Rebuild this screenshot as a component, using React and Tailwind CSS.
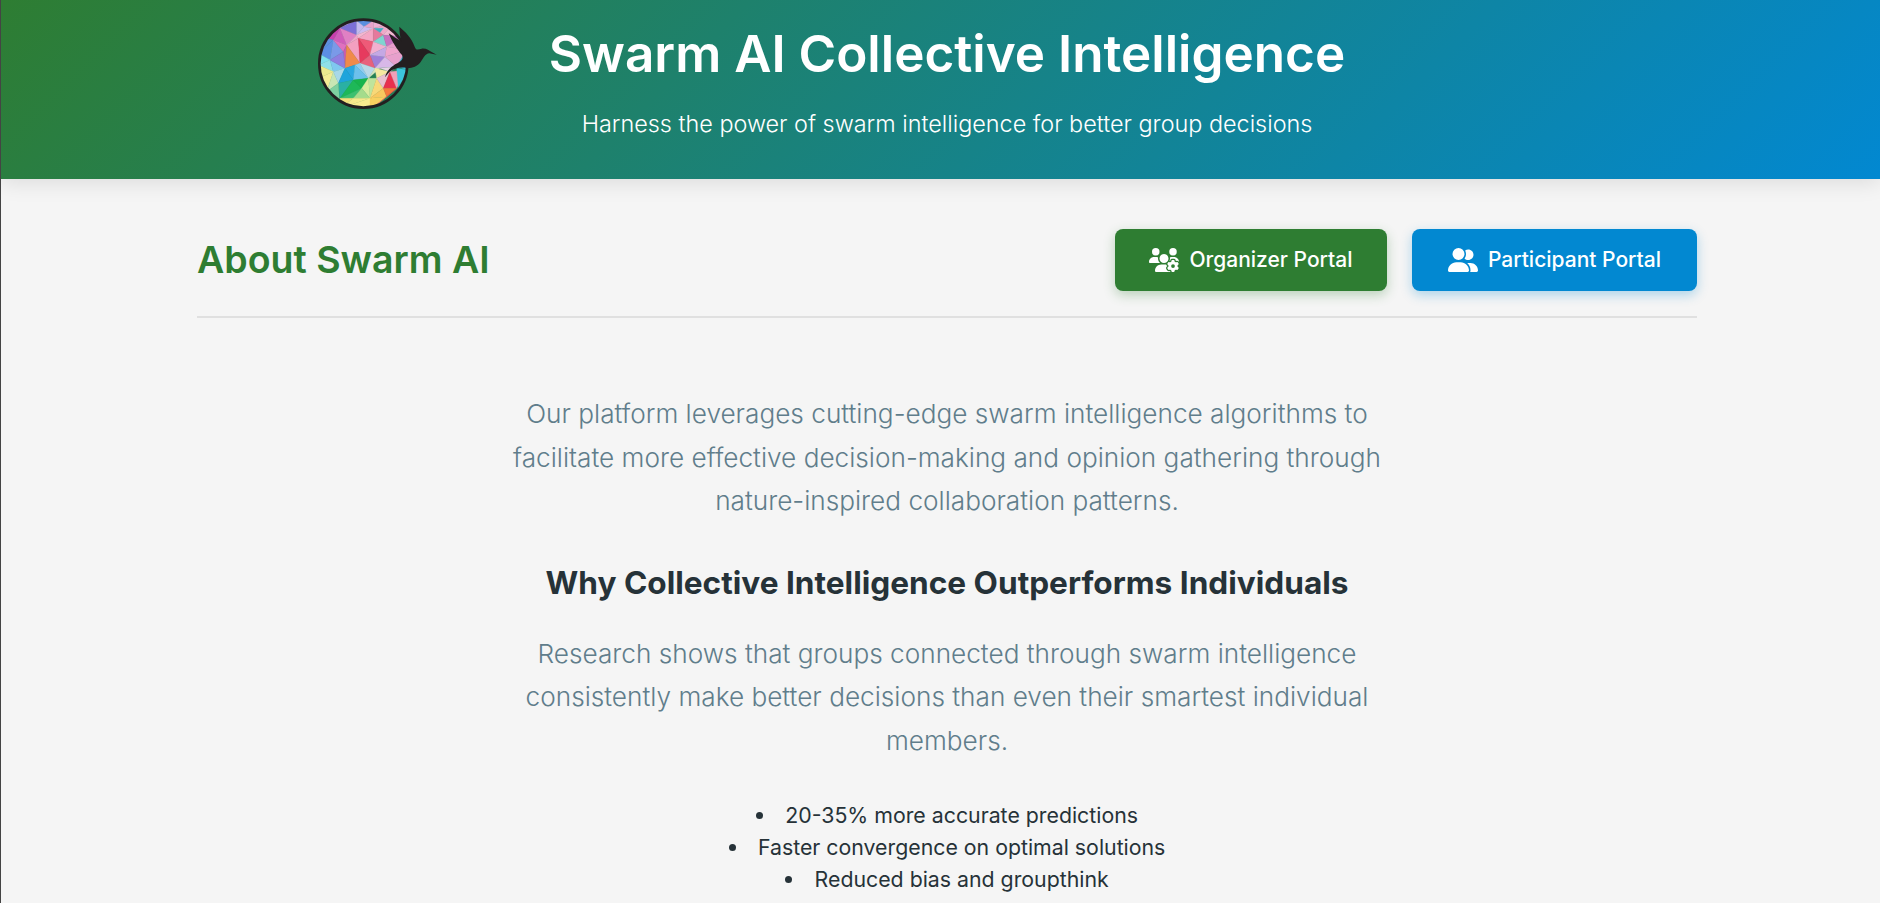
import { FaUsersGear, FaUserGroup } from "react-icons/fa6";

// facets of the logo, coordinates in the 540x390 box
const FACETS = [
  ["#b48fe0", "130,60 200,62 150,85"],
  ["#7d6fd6", "200,62 150,85 200,105"],
  ["#5a8fe0", "200,62 250,62 222,80"],
  ["#c5b8ee", "200,62 222,80 200,105"],
  ["#cdbcf0", "222,80 250,85 200,105"],
  ["#eeb0d4", "250,62 310,70 250,85"],
  ["#e8a4cc", "222,80 250,62 250,85"],
  ["#f0a8c8", "310,70 250,85 280,105"],
  ["#3fb0c4", "250,85 280,85 262,108"],
  ["#f2b8d2", "310,70 340,110 280,105"],
  ["#a86ccc", "130,60 90,110 150,85"],
  ["#c83fae", "90,110 130,120 150,85"],
  ["#d05cba", "150,85 130,120 170,135"],
  ["#e080c4", "150,85 200,105 170,135"],
  ["#f0a4ca", "200,105 205,115 170,135"],
  ["#f3b6d0", "200,105 250,85 205,115"],
  ["#f4a6c4", "205,115 250,85 250,125"],
  ["#e6789c", "250,85 280,105 250,125"],
  ["#7fd4d0", "280,105 250,125 290,140"],
  ["#c870c0", "280,105 340,110 290,140"],
  ["#e89ccc", "340,110 350,150 290,140"],
  ["#5f8fdc", "90,110 85,160 130,120"],
  ["#5c8ee4", "85,160 120,180 130,120"],
  ["#7a9ae8", "130,120 120,180 160,155"],
  ["#e070c0", "130,120 170,135 160,155"],
  ["#f3a0c0", "170,135 205,115 210,190"],
  ["#c95cb0", "160,155 170,135 165,205"],
  ["#f08a4a", "170,135 210,190 165,205"],
  ["#ee5a78", "205,115 250,125 240,165"],
  ["#e63a5e", "205,115 240,165 210,190"],
  ["#9f7fd8", "240,165 285,170 255,205"],
  ["#e8607c", "210,190 240,165 255,205"],
  ["#f2b0d0", "250,125 290,140 240,165"],
  ["#c4a8e4", "290,140 285,170 240,165"],
  ["#d8b8e8", "285,170 320,200 255,205"],
  ["#f0a4cc", "290,140 350,150 285,170"],
  ["#e8a0cc", "350,150 320,200 285,170"],
  ["#7fe0ee", "85,160 85,195 120,180"],
  ["#8fe0e8", "120,180 85,195 130,215"],
  ["#7fc8f0", "120,180 165,205 130,215"],
  ["#8e7ee0", "120,180 160,155 165,205"],
  ["#ece98e", "85,195 85,235 130,215"],
  ["#f5ec94", "85,235 110,275 130,215"],
  ["#c8e6b4", "110,275 145,250 130,215"],
  ["#a8d8e8", "130,215 165,205 145,250"],
  ["#2aa6e0", "165,205 195,195 190,240"],
  ["#1fa4dc", "145,250 165,205 190,240"],
  ["#8ecbf0", "195,195 210,190 235,235"],
  ["#6cc0ec", "195,195 235,235 190,240"],
  ["#b8d8e8", "210,190 255,205 235,235"],
  ["#d4e4c0", "255,205 270,205 235,235"],
  ["#2ab0a4", "145,250 190,240 150,295"],
  ["#7ed0a0", "110,275 145,250 150,325"],
  ["#1eb858", "190,240 215,265 150,295"],
  ["#18b44c", "190,240 235,235 215,265"],
  ["#3cc070", "150,295 215,265 190,295"],
  ["#bfe49c", "235,235 260,235 240,295"],
  ["#d8ec9e", "215,265 235,235 240,295"],
  ["#a4dc8c", "190,295 215,265 240,295"],
  ["#f4e07c", "150,295 190,295 150,325"],
  ["#f6e98c", "150,325 190,295 240,295"],
  ["#f8ec90", "150,325 240,295 240,330"],
  ["#f8d878", "260,235 280,265 240,295"],
  ["#f5e8a0", "255,205 300,215 260,235"],
  ["#e8c0d0", "300,215 280,265 260,235"],
  ["#f8c860", "280,265 290,290 240,295"],
  ["#f8d060", "240,295 290,290 240,330"],
  ["#e8304e", "280,265 300,215 320,265"],
  ["#f0a0b8", "300,215 350,210 320,265"],
  ["#f47a3c", "280,265 320,265 290,290"],
  ["#e84a60", "320,265 290,290 240,330"],
  ["#36bcd8", "320,200 350,150 355,210"],
  ["#3cc4dc", "320,205 355,210 325,262"],
  ["#e8d4e4", "270,205 300,215 320,200"],
];

function Logo() {
  return (
    <svg viewBox="0 0 540 390" className="w-[180px] h-[130px] shrink-0">
      <defs>
        <clipPath id="logoClip">
          <circle cx="220" cy="191" r="132" />
        </clipPath>
      </defs>
      <g clipPath="url(#logoClip)">
        {FACETS.map(([fill, points]) => (
          <polygon key={points} fill={fill} stroke={fill} strokeWidth="1" points={points} />
        ))}
      </g>
      <circle cx="220" cy="191" r="132" fill="none" stroke="#231f20" strokeWidth="8" />
      <path
        fill="#231f20"
        d="M328 80 C345 95 365 112 374 140 C378 152 385 148 395 146 C408 144 418 152 425 156 L440 164 L418 160 C405 162 402 172 392 186 C382 200 365 205 350 204 C330 200 312 206 298 216 L285 232 C290 212 305 198 322 190 C332 184 342 178 336 165 C322 150 306 125 296 100 C308 108 322 118 334 124 C330 110 328 95 328 80 Z"
      />
    </svg>
  );
}

export default function App() {
  return (
    <div className="h-screen overflow-hidden bg-[#f5f5f5] border-l border-[#444444] font-['Inter','Liberation_Sans',sans-serif]">
      {/* Header */}
      <header className="relative h-[179px] flex items-start pl-[289px] pr-[456px] text-white text-center bg-[linear-gradient(135deg,#2e7d32,#0288d1)] shadow-[0_4px_20px_rgba(0,0,0,0.1)]">
        <Logo />
        <div className="flex-1">
          <h1 className="mt-[22px] text-[51.2px] leading-[62px] font-semibold whitespace-nowrap">Swarm AI Collective Intelligence</h1>
          <p className="mt-[24px] text-[23.4px] leading-[32px] font-light whitespace-nowrap">Harness the power of swarm intelligence for better group decisions</p>
        </div>
      </header>

      <main className="pl-[196px] pr-[183px]">
        {/* Title row */}
        <div className="mt-[50px] pb-[25px] flex items-center justify-between border-b-2 border-[#e0e0e0]">
          <h2 className="text-[37.5px] leading-[52px] font-semibold text-[#2e7d32]">About Swarm AI</h2>
          <div className="flex gap-[25px]">
            <button className="h-[62px] w-[272px] flex items-center justify-center gap-[10px] rounded-lg bg-[#2e7d32] text-white text-[21px] font-medium shadow-[0_4px_12px_rgba(46,125,50,0.3)]">
              <FaUsersGear className="text-[30px]" />
              Organizer Portal
            </button>
            <button className="h-[62px] w-[285px] flex items-center justify-center gap-[10px] rounded-lg bg-[#0288d1] text-white text-[21px] font-medium shadow-[0_4px_12px_rgba(2,136,209,0.3)]">
              <FaUserGroup className="text-[30px]" />
              Participant Portal
            </button>
          </div>
        </div>

        {/* About text */}
        <div className="mt-[74px] mx-auto w-[900px] text-center">
          <p className="text-[26.2px] leading-[43.5px] font-light text-[#607d8b]">
            Our platform leverages cutting-edge swarm intelligence algorithms to facilitate more effective decision-making and opinion gathering through nature-inspired collaboration patterns.
          </p>
          <h3 className="mt-[38px] text-[31.6px] leading-[44px] font-bold text-[#263238]">Why Collective Intelligence Outperforms Individuals</h3>
          <p className="mt-[27px] text-[26.2px] leading-[43.5px] font-light text-[#607d8b]">
            Research shows that groups connected through swarm intelligence consistently make better decisions than even their smartest individual members.
          </p>
          <ul className="mt-[37px] list-disc list-inside text-[21.3px] leading-[32px] text-[#263238]">
            <li>20-35% more accurate predictions</li>
            <li>Faster convergence on optimal solutions</li>
            <li>Reduced bias and groupthink</li>
          </ul>
        </div>
      </main>
    </div>
  );
}
